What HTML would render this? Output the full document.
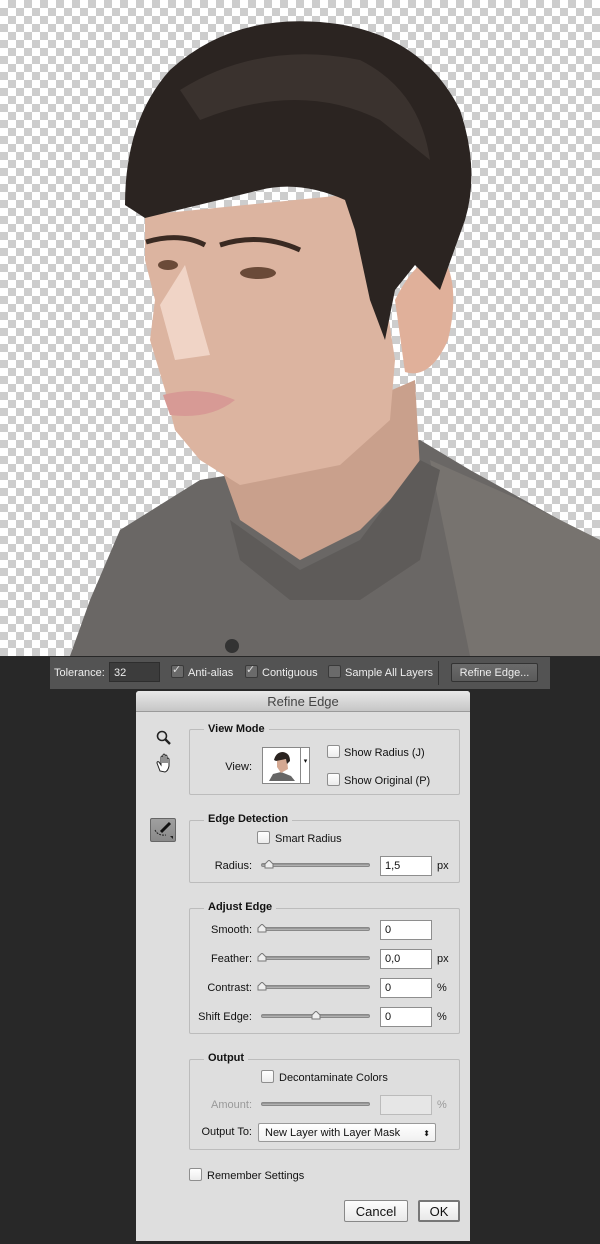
<!DOCTYPE html>
<html><head><meta charset="utf-8"><style>
*{margin:0;padding:0;box-sizing:border-box}
body{width:600px;height:1244px;overflow:hidden;background:#282828;font-family:"Liberation Sans",sans-serif;font-size:11px;color:#111;position:relative}
.a{position:absolute}
#photo{left:0;top:0;width:600px;height:656px;background-color:#fff;background-image:linear-gradient(45deg,#cdcdcd 25%,transparent 25%,transparent 75%,#cdcdcd 75%),linear-gradient(45deg,#cdcdcd 25%,transparent 25%,transparent 75%,#cdcdcd 75%);background-size:16px 16px;background-position:0 0,8px 8px;overflow:hidden}
#tb{left:50px;top:657px;width:500px;height:32px;background:#535353;color:#e8e8e8;font-size:11px}
.tcb{position:absolute;top:665px;width:13px;height:13px;background:#6a6a6a;border:1px solid #3a3a3a;border-radius:2px}
#dlg{left:136px;top:691px;width:334px;height:550px;background:#dedede;border-radius:3px 3px 0 0;overflow:hidden}
#title{left:0;top:0;width:334px;height:21px;background:linear-gradient(#e8e8e8,#c6c6c6);border-bottom:1px solid #9a9a9a;text-align:center;font-size:13px;line-height:21px;color:#444}
.fs{position:absolute;border:1px solid #bcbcbc;border-radius:2px}
.lg{position:absolute;font-weight:bold;background:#dedede;padding:0 4px;font-size:11px;margin-top:1px}
.cb{position:absolute;width:13px;height:13px;background:linear-gradient(#fff,#ececec);border:1px solid #8e8e8e;border-radius:2px}
.t{position:absolute;white-space:nowrap;padding-top:2px}
.r{position:absolute;white-space:nowrap;right:218px;text-align:right;padding-top:2px}
.sl{position:absolute;height:4px;width:109px;background:linear-gradient(#8a8a8a,#bdbdbd);border-radius:2px;border:1px solid #888}
.th{position:absolute;width:10px;height:9px;}
.in{position:absolute;width:52px;height:20px;background:#fff;border:1px solid #8e8e8e;padding:3px 4px;font-size:11px}
.btn{position:absolute;height:22px;background:linear-gradient(#fdfdfd,#e8e8e8);border:1px solid #888;border-radius:2px;text-align:center;font-size:13px;line-height:20px}
</style></head><body>
<div id="photo" class="a">
<svg width="600" height="656" viewBox="0 0 600 656">
 <path d="M70 656 L90 600 L120 530 L200 480 L260 470 L420 440 L470 470 L560 520 L600 540 L600 656 Z" fill="#6a6765"/>
 <path d="M430 460 L520 500 L600 540 L600 656 L470 656 Z" fill="#77736f"/>
 <path d="M215 450 L240 520 L300 560 L360 530 L420 470 L415 380 L300 430 Z" fill="#c9a08c"/>
 <path d="M230 520 L300 570 L360 540 L420 460 L440 470 L420 560 L360 600 L290 600 L240 560 Z" fill="#5e5b59"/>
 <path d="M145 215 L345 195 L380 260 L395 360 L390 420 L340 465 L240 485 L200 460 L175 430 L165 390 L150 340 L155 300 L145 260 Z" fill="#dcb4a0"/>
 <path d="M160 305 L185 265 L200 320 L210 355 L175 360 Z" fill="#f0d4c6"/>
 <path d="M163 395 Q200 385 235 400 Q210 420 170 415 Z" fill="#d79a95"/>
 <path d="M395 300 Q420 250 445 260 Q460 290 448 340 Q430 380 405 372 Z" fill="#e0b09a"/>
 <path d="M125 205 Q125 120 170 70 Q230 15 320 22 Q420 30 460 110 Q480 170 465 220 L440 290 L415 265 L395 290 L385 340 L370 300 L355 230 L345 200 Q300 180 260 190 L145 218 Z" fill="#2b2421"/>
 <path d="M180 90 Q260 40 360 60 Q420 90 430 160 L380 120 Q300 80 200 120 Z" fill="#3a322e"/>
 <path d="M146 242 Q180 232 205 245" stroke="#3a2a22" stroke-width="5" fill="none"/>
 <path d="M220 245 Q260 232 300 250" stroke="#3a2a22" stroke-width="5" fill="none"/>
 <ellipse cx="258" cy="273" rx="18" ry="6" fill="#6a4a38"/>
 <ellipse cx="168" cy="265" rx="10" ry="5" fill="#6a4a38"/>
 <circle cx="232" cy="646" r="7" fill="#333"/>
</svg>
</div>
<div id="tb" class="a"></div>
<div class="t" style="left:54px;top:665px;color:#eee">Tolerance:</div>
<div class="a" style="left:109px;top:662px;width:51px;height:20px;background:#3c3c3c;border:1px solid #2e2e2e;color:#eee;padding:4px 4px">32</div>
<div class="tcb" style="left:171px"></div><div class="t" style="left:172px;top:661px;color:#ddd">✓</div>
<div class="t" style="left:188px;top:665px;color:#eee">Anti-alias</div>
<div class="tcb" style="left:245px"></div><div class="t" style="left:246px;top:661px;color:#ddd">✓</div>
<div class="t" style="left:262px;top:665px;color:#eee">Contiguous</div>
<div class="tcb" style="left:328px"></div>
<div class="t" style="left:345px;top:665px;color:#eee">Sample All Layers</div>
<div class="a" style="left:438px;top:661px;width:1px;height:24px;background:#333"></div>
<div class="a" style="left:451px;top:663px;width:87px;height:19px;background:linear-gradient(#6a6a6a,#5a5a5a);border:1px solid #333;border-radius:2px;color:#eee;text-align:center;line-height:18px">Refine Edge...</div>

<div id="dlg" class="a">
 <div id="title" class="a">Refine Edge</div>
 <svg class="a" style="left:19px;top:39px" width="18" height="44" viewBox="0 0 18 44">
  <circle cx="7" cy="6" r="4.5" fill="none" stroke="#222" stroke-width="1.6"/>
  <path d="M10 9 L15 14" stroke="#222" stroke-width="2.4"/>
  <path d="M5 41 L2 33 Q2 31 4 32 L6 35 L6 27 Q7 25 8 27 L8 33 L8 25 Q9 23 10 25 L10 33 L10 26 Q11 24 12 26 L12 33 L12 29 Q13 27 14 29 L14 36 Q13 41 10 42 Z" fill="#fff" stroke="#222" stroke-width="1"/>
 </svg>
 <div class="a" style="left:14px;top:127px;width:26px;height:24px;background:linear-gradient(#a0a0a0,#8a8a8a);border:1px solid #666;border-radius:2px"></div>
 <svg class="a" style="left:16px;top:129px" width="22" height="20" viewBox="0 0 22 20"><path d="M18 3 L9 12" stroke="#111" stroke-width="3"/><path d="M3 10 Q6 16 14 15" stroke="#222" stroke-width="1" stroke-dasharray="2 1" fill="none"/><path d="M18 16 L21 16 L21 19 Z" fill="#222"/></svg>

 <div class="fs" style="left:53px;top:38px;width:271px;height:66px"></div>
 <div class="lg" style="left:68px;top:31px">View Mode</div>
 <div class="r" style="top:68px;right:218px">View:</div>
 <div class="a" style="left:126px;top:56px;width:48px;height:37px;background:#fff;border:1px solid #888"></div>
 <div class="a" style="left:164px;top:56px;width:10px;height:37px;border-left:1px solid #888;font-size:7px;text-align:center;line-height:30px">▾</div>
 <svg class="a" style="left:131px;top:59px" width="30" height="31" viewBox="0 0 30 31"><path d="M2 31 L6 24 L14 22 L24 26 L28 31Z" fill="#666"/><path d="M10 10 L20 9 L21 19 L14 23 L10 17Z" fill="#d4a892"/><path d="M7 10 Q9 2 16 2 Q23 3 23 11 L20 14 L19 9 L9 11Z" fill="#2a2320"/></svg>
 <div class="cb" style="left:191px;top:54px"></div><div class="t" style="left:208px;top:54px">Show Radius (J)</div>
 <div class="cb" style="left:191px;top:82px"></div><div class="t" style="left:208px;top:82px">Show Original (P)</div>

 <div class="fs" style="left:53px;top:129px;width:271px;height:63px"></div>
 <div class="lg" style="left:68px;top:121px">Edge Detection</div>
 <div class="cb" style="left:121px;top:140px"></div><div class="t" style="left:139px;top:140px">Smart Radius</div>
 <div class="r" style="top:167px">Radius:</div>
 <div class="sl" style="left:125px;top:172px"></div>
 <svg class="th" style="left:128px;top:169px"><path d="M1 8 L1 4 L5 0 L9 4 L9 8Z" fill="#eee" stroke="#777"/></svg>
 <div class="in" style="left:244px;top:165px">1,5</div><div class="t" style="left:301px;top:167px">px</div>

 <div class="fs" style="left:53px;top:217px;width:271px;height:126px"></div>
 <div class="lg" style="left:68px;top:209px">Adjust Edge</div>
 <div class="r" style="top:231px">Smooth:</div>
 <div class="sl" style="left:125px;top:236px"></div><svg class="th" style="left:121px;top:233px"><path d="M1 8 L1 4 L5 0 L9 4 L9 8Z" fill="#eee" stroke="#777"/></svg>
 <div class="in" style="left:244px;top:229px">0</div>
 <div class="r" style="top:260px">Feather:</div>
 <div class="sl" style="left:125px;top:265px"></div><svg class="th" style="left:121px;top:262px"><path d="M1 8 L1 4 L5 0 L9 4 L9 8Z" fill="#eee" stroke="#777"/></svg>
 <div class="in" style="left:244px;top:258px">0,0</div><div class="t" style="left:301px;top:260px">px</div>
 <div class="r" style="top:289px">Contrast:</div>
 <div class="sl" style="left:125px;top:294px"></div><svg class="th" style="left:121px;top:291px"><path d="M1 8 L1 4 L5 0 L9 4 L9 8Z" fill="#eee" stroke="#777"/></svg>
 <div class="in" style="left:244px;top:287px">0</div><div class="t" style="left:301px;top:289px">%</div>
 <div class="r" style="top:318px">Shift Edge:</div>
 <div class="sl" style="left:125px;top:323px"></div><svg class="th" style="left:175px;top:320px"><path d="M1 8 L1 4 L5 0 L9 4 L9 8Z" fill="#eee" stroke="#777"/></svg>
 <div class="in" style="left:244px;top:316px">0</div><div class="t" style="left:301px;top:318px">%</div>

 <div class="fs" style="left:53px;top:368px;width:271px;height:91px"></div>
 <div class="lg" style="left:68px;top:360px">Output</div>
 <div class="cb" style="left:125px;top:379px"></div><div class="t" style="left:143px;top:379px">Decontaminate Colors</div>
 <div class="r" style="top:406px;color:#999">Amount:</div>
 <div class="sl" style="left:125px;top:411px"></div>
 <div class="in" style="left:244px;top:404px;background:#e6e6e6;border-color:#bbb"></div><div class="t" style="left:301px;top:406px;color:#999">%</div>
 <div class="r" style="top:433px">Output To:</div>
 <div class="a" style="left:122px;top:432px;width:178px;height:19px;background:linear-gradient(#fff,#f0f0f0);border:1px solid #999;border-radius:2px;padding:2px 6px;line-height:15px">New Layer with Layer Mask<span style="position:absolute;right:5px;top:2px;font-size:8px">⬍</span></div>

 <div class="cb" style="left:53px;top:477px"></div><div class="t" style="left:71px;top:477px">Remember Settings</div>
 <div class="btn" style="left:208px;top:509px;width:64px;line-height:21px">Cancel</div>
 <div class="btn" style="left:282px;top:509px;width:42px;border:2px solid #777;line-height:19px">OK</div>
</div>
</body></html>
